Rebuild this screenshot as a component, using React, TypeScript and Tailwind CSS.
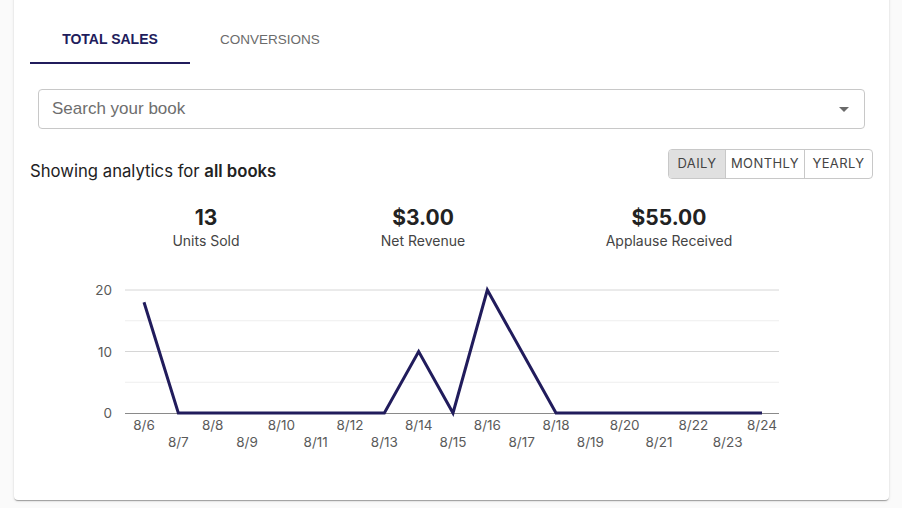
import React from "react";

const data = [18, 0, 0, 0, 0, 0, 0, 0, 10, 0, 20, 10, 0, 0, 0, 0, 0, 0, 0];
const labels = data.map((_, i) => `8/${6 + i}`);

function Chart() {
  // svg origin at page x=80, y=280
  const ox = 80;
  const oy = 280;
  const x0 = 144 - ox;
  const step = (762 - 144) / 18;
  const yFor = (v: number) => 412 - oy - v * 6.15;
  const pts = data.map((v, i) => `${x0 + i * step},${yFor(v)}`).join(" ");
  const gx1 = 125 - ox;
  const gx2 = 779 - ox;
  return (
    <svg width={720} height={175} className="block" style={{ fontFamily: "Inter, 'Open Sans', sans-serif" }}>
      {[20, 10].map((v) => (
        <line key={v} x1={gx1} x2={gx2} y1={yFor(v)} y2={yFor(v)} stroke="#d6d6d6" strokeWidth={1} />
      ))}
      {[15, 5].map((v) => (
        <line key={v} x1={gx1} x2={gx2} y1={yFor(v)} y2={yFor(v)} stroke="#eeeeee" strokeWidth={1} />
      ))}
      <line x1={gx1} x2={gx2} y1={yFor(0) + 0.5} y2={yFor(0) + 0.5} stroke="#8a8a8a" strokeWidth={1.2} />
      {[20, 10, 0].map((v) => (
        <text key={v} x={112 - ox} y={yFor(v) + 5} textAnchor="end" fontSize={13.5} fill="#5a5a5a">
          {v}
        </text>
      ))}
      <polyline points={pts} fill="none" stroke="#211c5c" strokeWidth={3} strokeLinejoin="miter" />
      {labels.map((l, i) => (
        <text
          key={l}
          x={x0 + i * step}
          y={i % 2 === 0 ? 429 - oy : 446 - oy}
          textAnchor="middle"
          fontSize={13.5}
          fill="#5a5a5a"
        >
          {l}
        </text>
      ))}
    </svg>
  );
}

export default function App() {
  return (
    <div className="min-h-[508px] w-[902px] bg-[#fafafa] overflow-hidden" style={{ fontFamily: "Inter, 'Open Sans', sans-serif" }}>
      <div className="ml-[14px] -mt-2 w-[875px] h-[508px] bg-white rounded shadow-[0_2px_1px_-1px_rgba(0,0,0,0.2),0_1px_1px_0_rgba(0,0,0,0.14),0_1px_3px_0_rgba(0,0,0,0.12)] px-4 pt-6">
        {/* Tabs */}
        <div className="flex h-12" style={{ fontFamily: "'Liberation Sans', Arial, sans-serif" }}>
          <div className="w-40 flex items-center justify-center border-b-2 border-[#211c5c] text-[14px] font-bold text-[#211c5c]">
            TOTAL SALES
          </div>
          <div className="w-40 flex items-center justify-center text-[13.5px] text-[#6b6b6b]">
            CONVERSIONS
          </div>
        </div>

        {/* Search */}
        <div className="mx-2 mt-[25px] h-10 border border-[#c8c8c8] rounded flex items-center justify-between pl-[13px] pr-[15px]">
          <span className="text-[17px] text-[#6e6e6e]" style={{ fontFamily: "'Liberation Sans', Arial, sans-serif" }}>
            Search your book
          </span>
          <svg width="10" height="5" viewBox="0 0 10 5">
            <path d="M0 0 L10 0 L5 5 Z" fill="#6a6a6a" />
          </svg>
        </div>

        {/* Heading row */}
        <div className="mt-[20px] flex items-end justify-between">
          <div className="text-[16.7px] text-[#222] leading-[20px] mb-[-2px]">
            Showing analytics for <span className="font-semibold">all books</span>
          </div>
          <div className="flex h-[30px] border border-[#c8c8c8] rounded text-[13px] text-[#444] tracking-[0.4px]">
            <div className="w-[56px] flex items-center justify-center bg-[#e0e0e0] rounded-l-[3px]">DAILY</div>
            <div className="w-[79px] flex items-center justify-center border-l border-[#c8c8c8]">MONTHLY</div>
            <div className="w-[68px] flex items-center justify-center border-l border-[#c8c8c8]">YEARLY</div>
          </div>
        </div>

        {/* Stats */}
        <div className="mt-[26px] flex">
          <div className="ml-[116px] w-[120px] text-center">
            <div className="text-[21px] font-bold text-[#222] leading-[26px]">13</div>
            <div className="text-[14px] text-[#444] leading-[20px]">Units Sold</div>
          </div>
          <div className="ml-[97px] w-[120px] text-center">
            <div className="text-[21px] font-bold text-[#222] leading-[26px]">$3.00</div>
            <div className="text-[14px] text-[#444] leading-[20px]">Net Revenue</div>
          </div>
          <div className="ml-[106px] w-[160px] text-center">
            <div className="text-[21px] font-bold text-[#222] leading-[26px]">$55.00</div>
            <div className="text-[14px] text-[#444] leading-[20px]">Applause Received</div>
          </div>
        </div>

        {/* Chart */}
        <div className="mt-[30px] ml-[50px]">
          <Chart />
        </div>
      </div>
    </div>
  );
}
